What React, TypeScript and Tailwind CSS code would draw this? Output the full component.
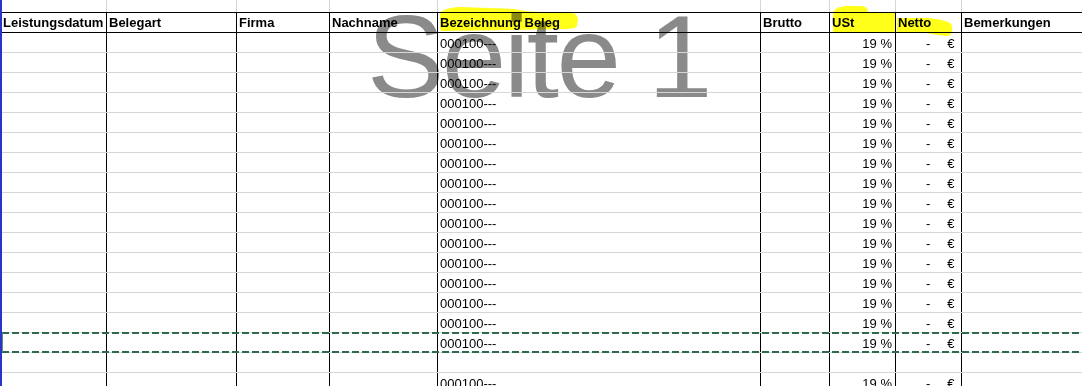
import React from "react";

const widths = [
  "w-[106px]",
  "w-[130px]",
  "w-[93px]",
  "w-[108px]",
  "w-[323px]",
  "w-[69px]",
  "w-[66px]",
  "w-[66px]",
];

const headers = [
  "Leistungsdatum",
  "Belegart",
  "Firma",
  "Nachname",
  "Bezeichnung Beleg",
  "Brutto",
  "USt",
  "Netto",
  "Bemerkungen",
];

function cellClass(i: number, line: string) {
  const base = i < 8 ? `${widths[i]} shrink-0` : "flex-1 min-w-0";
  const border = i === 0 ? "" : `border-l ${line}`;
  return `${base} ${border}`;
}

function DataRow({ filled }: { filled: boolean }) {
  return (
    <div className="flex h-[20px] border-b border-[#d6d6d6]">
      {headers.map((_, i) => (
        <div
          key={i}
          className={`${cellClass(i, "border-black")} h-full pt-px leading-[19px] whitespace-nowrap`}
        >
          {filled && i === 4 && <span className="pl-[2px]">000100---</span>}
          {filled && i === 6 && (
            <div className="text-right pr-[3px]">19 %</div>
          )}
          {filled && i === 7 && (
            <div className="flex pl-[30px]">
              <span>-</span>
              <span className="ml-[17px]">€</span>
            </div>
          )}
        </div>
      ))}
    </div>
  );
}

export default function App() {
  const rows: boolean[] = [];
  for (let i = 0; i < 16; i++) rows.push(true);
  rows.push(false);
  rows.push(true);

  return (
    <div className="relative w-[1082px] h-[386px] overflow-hidden bg-white text-black text-[13px] font-['Liberation_Sans',Arial,sans-serif]">
      {/* watermark */}
      <div className="absolute left-[367px] top-[-1px] text-[116px] leading-none tracking-[-2.6px] text-[#8a8a8a] whitespace-nowrap font-['Liberation_Sans',Arial,sans-serif] select-none">
        Seite 1
      </div>

      <div className="relative flex flex-col">
        {/* top partial row */}
        <div className="flex h-[12px]">
          {headers.map((_, i) => (
            <div key={i} className={`${cellClass(i, "border-[#d6d6d6]")} h-full`} />
          ))}
        </div>
        {/* header */}
        <div className="flex h-[21px] border-y border-black font-bold">
          {headers.map((h, i) => (
            <div
              key={i}
              className={`${cellClass(i, "border-black")} h-full leading-[19px] whitespace-nowrap ${
                i === 0 ? "pl-[3px]" : "pl-[2px]"
              }`}
            >
              {h}
            </div>
          ))}
        </div>
        {rows.map((f, i) => (
          <DataRow key={i} filled={f} />
        ))}
      </div>

      {/* highlighter strokes */}
      <svg
        className="absolute left-0 top-0 mix-blend-multiply pointer-events-none"
        width="1082"
        height="60"
        viewBox="0 0 1082 60"
      >
        <path
          d="M440,14 Q442,8 460,7 L515,9 Q525,12 545,12 L572,13 Q578,14 578,20 L577,26 Q576,29 565,29 L443,31 Q440,31 440,28 Z"
          fill="#ffff1a"
        />
        <path
          d="M833,31 L833,14 Q834,7 845,6 L862,6 Q868,7 868,12 L895,13 L895,32 L833,32 Z"
          fill="#ffff1a"
        />
        <path
          d="M897,18 L928,18 Q946,20 950,23 Q953,25 952,32 Q951,36 946,36 Q936,35 926,33 L897,32 Z"
          fill="#ffff1a"
        />
      </svg>

      {/* copy marquee */}
      <svg
        className="absolute left-0 top-0 pointer-events-none"
        width="1082"
        height="386"
        viewBox="0 0 1082 386"
      >
        <line x1="2" y1="333" x2="1082" y2="333" stroke="#2f6a4c" strokeWidth="2" strokeDasharray="7 3" />
        <line x1="2" y1="352" x2="1082" y2="352" stroke="#2f6a4c" strokeWidth="2" strokeDasharray="7 3" />
        <line x1="2.5" y1="333" x2="2.5" y2="352" stroke="#5c8f74" strokeWidth="1" />
      </svg>

      {/* blue page border */}
      <div className="absolute left-0 top-0 h-full w-[2px] bg-[#2b33c8]" />
    </div>
  );
}
